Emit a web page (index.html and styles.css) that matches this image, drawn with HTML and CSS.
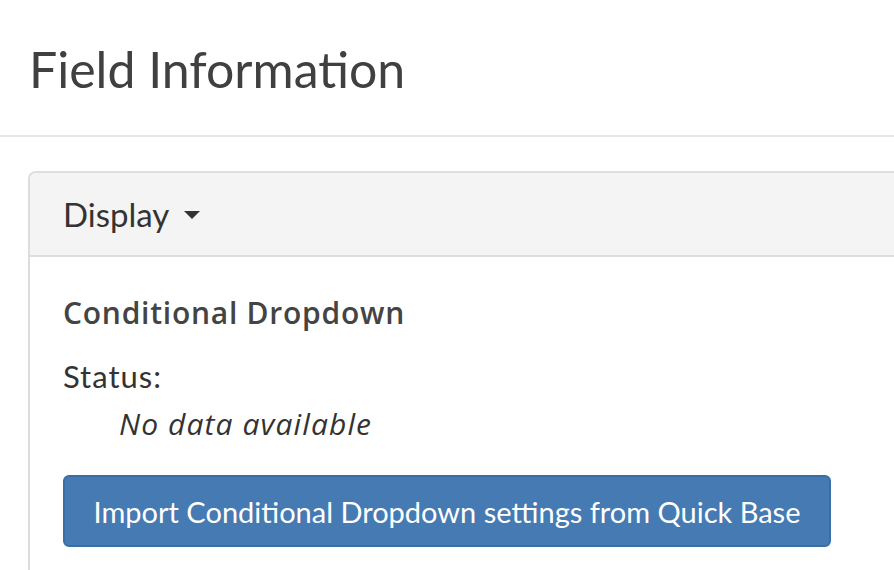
FILE: index.html
```html
<!DOCTYPE html>
<html>
<head>
<meta charset="utf-8">
<link rel="stylesheet" href="styles.css">
</head>
<body>
<header class="page-header">
  <h1 class="title">Field Information</h1>
</header>
<main class="content">
  <section class="panel">
    <div class="panel-heading">
      <span class="panel-title">Display</span>
      <span class="caret"></span>
    </div>
    <div class="panel-body">
      <h4 class="section-title">Conditional Dropdown</h4>
      <div class="status-label">Status:</div>
      <div class="status-value">No data available</div>
      <button class="btn-primary" type="button">Import Conditional Dropdown settings from Quick Base</button>
    </div>
  </section>
</main>
</body>
</html>
```
FILE: styles.css
```css
html, body {
  margin: 0;
  padding: 0;
  overflow: hidden;
  background: #fff;
}
body {
  font-family: Lato, "Liberation Sans", sans-serif;
  color: #333;
  width: 894px;
  height: 570px;
}
.page-header {
  height: 135px;
  border-bottom: 2px solid #e6e6e6;
  padding-left: 29px;
  box-sizing: content-box;
}
.title {
  margin: 0;
  padding-top: 38px;
  font-size: 50px;
  line-height: 62px;
  font-weight: 400;
  color: #404040;
}
.content {
  padding: 34px 0 0 28px;
}
.panel {
  border: 2px solid #dddddd;
  border-right: none;
  border-radius: 8px 0 0 8px;
  width: 900px;
  overflow: hidden;
}
.panel-heading {
  height: 82px;
  background: #f4f4f4;
  border-bottom: 2px solid #dddddd;
  padding-left: 33px;
  display: flex;
  align-items: center;
  gap: 15px;
}
.panel-title {
  font-size: 33px;
  color: #333;
}
.caret {
  width: 0;
  height: 0;
  border-left: 8px solid transparent;
  border-right: 8px solid transparent;
  border-top: 8px solid #333;
  margin-top: 2px;
}
.panel-body {
  padding: 36px 0 30px 33px;
}
.section-title {
  margin: 0;
  font-family: "Open Sans", Lato, sans-serif;
  font-size: 30px;
  letter-spacing: 0.75px;
  line-height: 40px;
  font-weight: 600;
  color: #444;
}
.status-label {
  margin-top: 23px;
  font-size: 31px;
  letter-spacing: 1px;
  line-height: 40px;
  color: #333;
}
.status-value {
  margin-top: 8px;
  padding-left: 56px;
  font-family: "Open Sans", Lato, sans-serif;
  font-size: 30px;
  letter-spacing: 1.1px;
  line-height: 40px;
  font-style: italic;
  color: #333;
}
.btn-primary {
  margin-top: 31px;
  display: block;
  width: 768px;
  height: 72px;
  background: #467ab3;
  border: 2px solid #3c6ea6;
  border-radius: 6px;
  color: #fff;
  font-family: Lato, "Liberation Sans", sans-serif;
  font-size: 29px;
  padding: 0;
}
```
